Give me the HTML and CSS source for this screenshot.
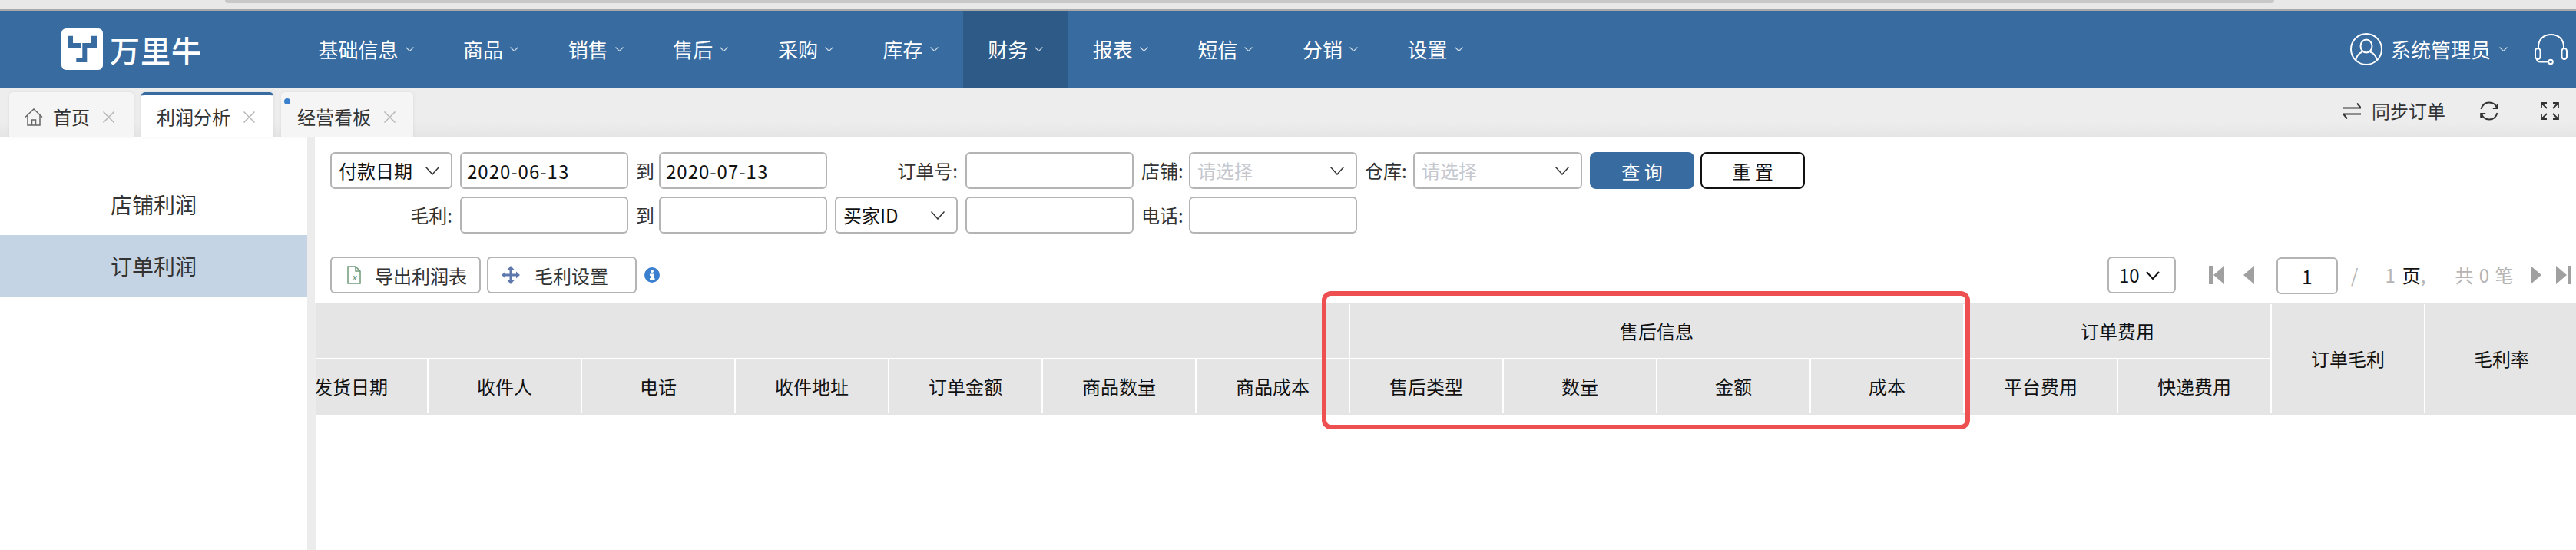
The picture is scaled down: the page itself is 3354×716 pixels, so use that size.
FILE: index.html
```html
<!DOCTYPE html>
<html lang="zh-CN">
<head>
<meta charset="utf-8">
<title>利润分析</title>
<link rel="stylesheet" href="styles.css">
</head>
<body>
<div class="app">
  <div class="chrome"><div class="chrome-strip"></div></div>

  <header class="nav">
    <div class="logo">
      <svg class="logo-mark" viewBox="0 0 54 54"><rect width="54" height="54" rx="6" fill="#fff"/><path fill="#386b9f" d="M8.300 9.700H15V19h10v6H8.300zM39 9.700h7V25H33.300v19h-14v-6h8V19H39z"/></svg>
      <span class="logo-text">万里牛</span>
    </div>
    <nav class="menu">
      <a class="menu-item">基础信息<svg class="chev" viewBox="0 0 11 6"><path d="M.5.5l5 5 5-5"/></svg></a>
      <a class="menu-item">商品<svg class="chev" viewBox="0 0 11 6"><path d="M.5.5l5 5 5-5"/></svg></a>
      <a class="menu-item">销售<svg class="chev" viewBox="0 0 11 6"><path d="M.5.5l5 5 5-5"/></svg></a>
      <a class="menu-item">售后<svg class="chev" viewBox="0 0 11 6"><path d="M.5.5l5 5 5-5"/></svg></a>
      <a class="menu-item">采购<svg class="chev" viewBox="0 0 11 6"><path d="M.5.5l5 5 5-5"/></svg></a>
      <a class="menu-item">库存<svg class="chev" viewBox="0 0 11 6"><path d="M.5.5l5 5 5-5"/></svg></a>
      <a class="menu-item active">财务<svg class="chev" viewBox="0 0 11 6"><path d="M.5.5l5 5 5-5"/></svg></a>
      <a class="menu-item">报表<svg class="chev" viewBox="0 0 11 6"><path d="M.5.5l5 5 5-5"/></svg></a>
      <a class="menu-item">短信<svg class="chev" viewBox="0 0 11 6"><path d="M.5.5l5 5 5-5"/></svg></a>
      <a class="menu-item">分销<svg class="chev" viewBox="0 0 11 6"><path d="M.5.5l5 5 5-5"/></svg></a>
      <a class="menu-item">设置<svg class="chev" viewBox="0 0 11 6"><path d="M.5.5l5 5 5-5"/></svg></a>
    </nav>
    <div class="user">
      <svg class="avatar" viewBox="0 0 42 42"><circle cx="21" cy="21" r="20"/><ellipse cx="21" cy="17" rx="7.500" ry="8.500"/><path d="M7 36c1-7 6-10.500 9-11.500M35 36c-1-7-6-10.500-9-11.500"/></svg>
      <span class="user-name">系统管理员</span>
      <svg class="chev user-chev" viewBox="0 0 11 6"><path d="M.5.5l5 5 5-5"/></svg>
      <svg class="headset" viewBox="0 0 43 40"><path d="M5 19V17C5 7 12 1 21.500 1S38 7 38 17v2"/><rect x="1" y="19" width="6.500" height="14" rx="3.250"/><rect x="35.500" y="19" width="6.500" height="14" rx="3.250"/><path d="M3 33c0 2.500 2 3.500 5 3.500h10"/><circle cx="21" cy="36.500" r="2.800"/></svg>
    </div>
  </header>

  <div class="tabbar">
    <div class="tab">
      <svg class="home" viewBox="0 0 24 23"><path d="M1 11.500L12 1l11 10.500M4 9v13h16V9M9.500 22v-7h5v7"/></svg>
      <span>首页</span>
      <svg class="close" viewBox="0 0 15 15"><path d="M.5.500l14 14M14.500.500l-14 14"/></svg>
    </div>
    <div class="tab current">
      <span>利润分析</span>
      <svg class="close" viewBox="0 0 15 15"><path d="M.5.500l14 14M14.500.500l-14 14"/></svg>
    </div>
    <div class="tab flagged">
      <span class="dot"></span>
      <span>经营看板</span>
      <svg class="close" viewBox="0 0 15 15"><path d="M.5.500l14 14M14.500.500l-14 14"/></svg>
    </div>
    <div class="tab-tools">
      <svg class="sync" viewBox="0 0 23 21"><path d="M0 6.500h23L18 .500M23 14.500H0l5 6"/></svg>
      <span class="sync-label">同步订单</span>
      <svg class="refresh" viewBox="0 0 24 27"><path d="M1.500 11C3 5.500 7 2.500 12 2.500s8.500 2.500 10 7M22.500 16c-1.500 5.500-5.500 8.500-10.500 8.500S3.500 22 2 17M22.800 4v6h-6M1.200 23v-6h6"/></svg>
      <svg class="expand" viewBox="0 0 24 23"><path d="M1 8V1h7M1 1l7 7M23 8V1h-7M23 1l-7 7M1 15v7h7M1 22l7-7M23 15v7h-7M23 22l-7-7"/></svg>
    </div>
  </div>

  <main class="main">
    <aside class="side">
      <div class="side-item">店铺利润</div>
      <div class="side-item on">订单利润</div>
    </aside>
    <section class="content">
      <form class="filters">
        <div class="select"><span>付款日期</span><svg class="caret" viewBox="0 0 18 11"><path d="M.5.500L9 10 17.500.500"/></svg></div>
        <input class="field" value="2020-06-13">
        <span class="to">到</span>
        <input class="field" value="2020-07-13">
        <label class="lbl">订单号:</label>
        <input class="field">
        <label class="lbl">店铺:</label>
        <div class="select"><span class="ph">请选择</span><svg class="caret" viewBox="0 0 18 11"><path d="M.5.500L9 10 17.500.500"/></svg></div>
        <label class="lbl">仓库:</label>
        <div class="select"><span class="ph">请选择</span><svg class="caret" viewBox="0 0 18 11"><path d="M.5.500L9 10 17.500.500"/></svg></div>
        <div class="actions">
          <button type="button" class="btn primary">查 询</button>
          <button type="button" class="btn outline">重 置</button>
        </div>

        <label class="lbl">毛利:</label>
        <input class="field">
        <span class="to">到</span>
        <input class="field">
        <div class="select"><span>买家ID</span><svg class="caret" viewBox="0 0 18 11"><path d="M.5.500L9 10 17.500.500"/></svg></div>
        <input class="field">
        <label class="lbl">电话:</label>
        <input class="field">
      </form>

      <div class="toolbar">
        <button type="button" class="tool export">
          <svg class="xls" viewBox="0 0 18 24"><path d="M1 1h10l6 6v16H1zM11 1v6h6"/><text x="9" y="19" class="xls-x">x</text></svg>
          导出利润表
        </button>
        <button type="button" class="tool margin">
          <svg class="move" viewBox="0 0 24 24"><path d="M12 0l4.500 5H13.500v5.500H19V7.500l5 4.500-5 4.500v-3H13.500V19h3L12 24l-4.500-5h3v-5.500H5v3L0 12l5-4.500v3h5.500V5h-3z"/></svg>
          毛利设置
        </button>
        <svg class="info" viewBox="0 0 20 20"><circle cx="10" cy="10" r="10"/><circle cx="10" cy="5" r="2" class="info-g"/><path class="info-g" d="M7 8.500h5V14h1.500v2.500h-6.500V14h1.500v-3H7z"/></svg>

        <div class="pager">
          <div class="size"><span>10</span><svg class="caret-b" viewBox="0 0 18 11"><path d="M1 1l8 9 8-9"/></svg></div>
          <svg class="pg first" viewBox="0 0 20 24"><path d="M0 0h5v24H0zM20 0v24L6 12z"/></svg>
          <svg class="pg prev" viewBox="0 0 14 24"><path d="M14 0v24L0 12z"/></svg>
          <input class="page-input" value="1">
          <span class="slash">/</span>
          <span class="total">1</span>
          <span class="unit">页</span><span class="comma">,</span>
          <span class="count">共 0 笔</span>
          <svg class="pg next" viewBox="0 0 14 24"><path d="M0 0v24l14-12z"/></svg>
          <svg class="pg last" viewBox="0 0 20 24"><path d="M0 0v24l14-12zM15 0h5v24h-5z"/></svg>
        </div>
      </div>

      <div class="table-wrap">
        <table class="grid">
          <colgroup>
            <col><col><col><col><col><col><col><col><col><col><col><col><col><col><col>
          </colgroup>
          <thead>
            <tr>
              <th colspan="7"></th>
              <th colspan="4">售后信息</th>
              <th colspan="2">订单费用</th>
              <th rowspan="2" class="tall">订单毛利</th>
              <th rowspan="2" class="tall">毛利率</th>
            </tr>
            <tr>
              <th>发货日期</th><th>收件人</th><th>电话</th><th>收件地址</th><th>订单金额</th><th>商品数量</th><th>商品成本</th>
              <th>售后类型</th><th>数量</th><th>金额</th><th>成本</th>
              <th>平台费用</th><th>快递费用</th>
            </tr>
          </thead>
        </table>
      </div>
      <div class="highlight"></div>
    </section>
  </main>
</div>
</body>
</html>
```
FILE: styles.css
```css
* { box-sizing: border-box; }
html, body { margin: 0; padding: 0; background: #fff; }
body { font-family: "Noto Sans CJK SC", "Noto Sans", sans-serif; color: #333; overflow: hidden; }
input, button { font-family: inherit; }
.app { width: 3354px; height: 716px; display: flex; flex-direction: column; overflow: hidden; }

.chrome { height: 14px; flex: none; background: #e8e8e8; border-bottom: 2px solid #a9a9a9; padding: 0 393px 0 293px; }
.chrome-strip { height: 4px; background: #c8c8c8; border-radius: 0 0 10px 10px; }

.nav { height: 100px; flex: none; background: #386b9f; display: flex; color: #fff; }
.logo { width: 382.5px; flex: none; display: flex; align-items: center; padding-left: 80px; }
.logo-mark { width: 54px; height: 54px; display: block; }
.logo-text { margin-left: 9px; font-size: 39px; line-height: 54px; font-weight: 500; letter-spacing: 1px; }
.menu { display: flex; }
.menu-item { display: flex; align-items: center; gap: 9px; padding: 0 32.6px 0 32px; font-size: 26px; line-height: 36px; }
.menu-item.active { background: #2d5a86; }
.chev { width: 11px; height: 6px; display: block; fill: none; stroke: #fff; stroke-opacity: .75; stroke-width: 1.2; }
.user { margin-left: auto; display: flex; align-items: center; padding-right: 11px; }
.avatar { width: 42px; height: 42px; fill: none; stroke: #fff; stroke-width: 2; }
.user-name { margin-left: 11px; font-size: 26px; line-height: 36px; }
.user-chev { margin-left: 11px; }
.headset { width: 43px; height: 40px; margin-left: 35px; fill: none; stroke: #fff; stroke-width: 2; }

.tabbar { height: 64px; flex: none; padding: 6px 0 0 12px; display: flex; gap: 10px; background: linear-gradient(#ededed 70%, #e5e5e5); }
.tab { position: relative; height: 58px; width: 172px; padding: 6px 0 0 20px; display: flex; align-items: center; font-size: 24px; line-height: 34px; color: #333; background: #f5f5f5; border-radius: 5px 5px 0 0; box-shadow: 0 0 5px rgba(0, 0, 0, .07); }
.tab:first-child { width: 162px; }
.tab.current { background: #fff; border-top: 4px solid #386b9f; padding-top: 2px; }
.tab.flagged { padding-left: 21px; }
.home { width: 24px; height: 23px; margin-right: 13px; fill: none; stroke: #666; stroke-width: 1.5; }
.close { width: 15px; height: 15px; margin-left: 17px; fill: none; stroke: #b5b5b5; stroke-width: 1.5; }
.dot { position: absolute; left: 4px; top: 8px; width: 8px; height: 8px; border-radius: 50%; background: #3b80cf; }
.tab-tools { margin-left: auto; display: flex; align-items: center; padding: 0 22px 10px 0; }
.sync { width: 23px; height: 21px; fill: none; stroke: #333; stroke-width: 2; }
.sync-label { margin-left: 14px; font-size: 24px; line-height: 34px; color: #333; }
.refresh { width: 24px; height: 27px; margin-left: 45px; fill: none; stroke: #333; stroke-width: 2; }
.expand { width: 24px; height: 23px; margin-left: 55px; fill: none; stroke: #333; stroke-width: 1.8; }

.main { flex: 1; min-height: 0; display: flex; }
.side { width: 400px; flex: none; padding-top: 48px; background: #fff; }
.side-item { height: 80px; display: flex; align-items: center; justify-content: center; font-size: 28px; color: #333; }
.side-item.on { background: #c4d4e4; }
.content { position: relative; flex: 1; min-width: 0; display: flex; flex-direction: column; margin-left: 10px; box-shadow: -10px 0 0 #ececec; background: #fff; }

.filters { display: grid; grid-template-columns: 159px 219px 20px 219px 160px 219px 52px 219px 53px 220px 280px; grid-auto-rows: 48px; column-gap: 10px; row-gap: 10px; padding: 20px 0 0 20px; align-items: center; justify-content: start; }
.field, .select { height: 48px; width: 100%; border: 2px solid #b4b4b4; border-radius: 6px; background: #fff; font-size: 24px; color: #111; }
.field { padding: 0 7px; outline: none; letter-spacing: 1px; }
.select { display: flex; align-items: center; justify-content: space-between; padding: 0 15px 0 9px; line-height: 34px; }
.ph { color: #c5c8ce; }
.caret { width: 18px; height: 11px; fill: none; stroke: #333; stroke-width: 1.5; }
.to { font-size: 24px; line-height: 34px; text-align: center; color: #333; }
.lbl { font-size: 24px; line-height: 34px; text-align: right; color: #333; white-space: nowrap; }
.actions { display: flex; gap: 8px; }
.btn { width: 136px; height: 48px; border-radius: 8px; font-size: 24px; padding: 0; }
.primary { background: #386b9f; border: 0; color: #fff; }
.outline { background: #fff; border: 2px solid #111; color: #111; }

.toolbar { display: flex; align-items: center; height: 48px; margin-top: 30px; padding-left: 20px; }
.tool { height: 48px; display: flex; align-items: center; background: #fff; border: 2px solid #b4b4b4; border-radius: 6px; font-size: 24px; color: #333; padding: 0; }
.export { width: 196px; padding-left: 20px; gap: 18px; }
.margin { width: 195px; margin-left: 8px; padding-left: 17px; gap: 19px; }
.xls { width: 18px; height: 24px; fill: none; stroke: #6f9a78; stroke-width: 1.5; }
.xls-x { font-size: 11px; font-style: italic; text-anchor: middle; fill: #5c8c67; stroke: none; }
.move { width: 24px; height: 24px; fill: #6079ad; }
.info { width: 20px; height: 20px; margin-left: 10px; fill: #3b80cf; }
.info-g { fill: #fff; }

.pager { margin-left: auto; width: 610px; flex: none; display: flex; align-items: center; font-size: 24px; line-height: 34px; color: #b5b5b5; }
.size { width: 89px; height: 48px; display: flex; align-items: center; gap: 8px; padding-left: 13px; border: 2px solid #b4b4b4; border-radius: 6px; color: #111; }
.caret-b { width: 18px; height: 11px; fill: none; stroke: #111; stroke-width: 2; }
.pg { height: 24px; display: block; fill: #a0a0a0; flex: none; }
.first { width: 20px; margin-left: 43px; }
.prev { width: 14px; margin-left: 25px; }
.page-input { width: 80px; height: 48px; margin: 2px 0 0 29px; border: 2px solid #b4b4b4; border-radius: 6px; background: #fff; text-align: center; font-size: 24px; color: #111; outline: none; padding: 0; }
.slash { margin-left: 17px; }
.total { margin-left: 35px; }
.unit { margin-left: 9px; color: #111; }
.count { margin-left: 38px; word-spacing: 2px; }
.next { width: 14px; margin-left: 22px; }
.last { width: 20px; margin-left: 19px; }

.table-wrap { flex: 1; margin-top: 12px; border-left: 2px solid #ececec; overflow: hidden; background: #fff; }
.grid { table-layout: fixed; width: 3000px; margin-left: -54px; border-collapse: separate; border-spacing: 0; border: solid #e5e5e5; border-width: 2px 0; background: #e5e5e5; }
.grid col { width: 200px; }
.grid th { height: 72px; padding: 0; font-size: 24px; line-height: 34px; font-weight: 400; color: #111; text-align: center; border-right: 2px solid #fff; }
.grid tr + tr th { height: 70px; }
.grid tr:first-child th { border-bottom: 2px solid #fff; }
.grid tr:first-child th.tall { border-bottom: 0; }
.highlight { position: absolute; left: 1311px; top: 201px; width: 844px; height: 180px; border: 6px solid #ee5052; border-radius: 12px; }
```
